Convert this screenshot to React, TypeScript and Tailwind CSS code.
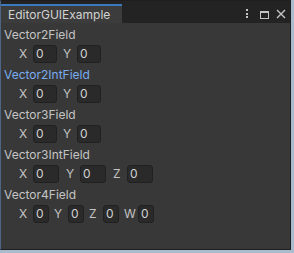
import type { ReactNode } from "react";

const font = { fontFamily: "Inter, 'Noto Sans', sans-serif" };

function Field({ label, width }: { label: string; width: string }) {
    return (
        <div className="flex items-start">
            <span className="w-[14px] h-[18px] leading-[18px] text-[12px] text-[#c4c4c4]">{label}</span>
            <div
                className={`${width} h-[18px] rounded-[3px] border border-[#212121] bg-[#2a2a2a] pl-[2px] leading-[16px] text-[12px] text-[#d2d2d2]`}
            >
                0
            </div>
        </div>
    );
}

function Group({ title, active, children, gap }: { title: string; active?: boolean; children: ReactNode; gap: string }) {
    return (
        <div className="flex flex-col">
            <div className={`h-[20px] leading-[20px] pl-[3px] text-[12px] ${active ? "text-[#7aacf0]" : "text-[#c4c4c4]"}`}>
                {title}
            </div>
            <div className={`h-[20px] pl-[18px] flex ${gap}`}>{children}</div>
        </div>
    );
}

export default function App() {
    return (
        <div className="w-[294px] h-[253px] bg-[#a9bccd]" style={font}>
            <div className="w-[291px] h-[250px] flex flex-col bg-[#383838] border border-[#1e1e1e] border-l-[#4d6685]">
                <div className="h-[22px] flex bg-[#232323] shrink-0">
                    <div className="mt-[3px] w-[121px] bg-[#3c3c3c] border-t-2 border-[#3a79bb] pl-[7px] leading-[17px] text-[12px] text-[#d2d2d2]">
                        EditorGUIExample
                    </div>
                    <div className="flex-1" />
                    <div className="flex items-start pt-[8px] pr-[4px]">
                        <svg width="10" height="10" viewBox="0 0 10 10">
                            <rect x="4" y="0" width="2" height="2" fill="#c4c4c4" />
                            <rect x="4" y="4" width="2" height="2" fill="#c4c4c4" />
                            <rect x="4" y="7" width="2" height="2" fill="#c4c4c4" />
                        </svg>
                        <svg width="11" height="10" viewBox="0 0 11 10" className="ml-[7px] mt-[1px]">
                            <rect x="1.5" y="1.5" width="8" height="7" fill="none" stroke="#c4c4c4" strokeWidth="1" />
                            <rect x="1" y="1" width="9" height="2" fill="#c4c4c4" />
                        </svg>
                        <svg width="10" height="10" viewBox="0 0 10 10" className="ml-[6px]">
                            <path d="M1 1 L9 9 M9 1 L1 9" stroke="#c4c4c4" strokeWidth="1.4" />
                        </svg>
                    </div>
                </div>
                <div className="pt-[2px] flex flex-col">
                    <Group title="Vector2Field" gap="gap-[6px]">
                        <Field label="X" width="w-[24px]" />
                        <Field label="Y" width="w-[24px]" />
                    </Group>
                    <Group title="Vector2IntField" active gap="gap-[6px]">
                        <Field label="X" width="w-[24px]" />
                        <Field label="Y" width="w-[24px]" />
                    </Group>
                    <Group title="Vector3Field" gap="gap-[6px]">
                        <Field label="X" width="w-[24px]" />
                        <Field label="Y" width="w-[24px]" />
                    </Group>
                    <Group title="Vector3IntField" gap="gap-[7px]">
                        <Field label="X" width="w-[26px]" />
                        <Field label="Y" width="w-[26px]" />
                        <Field label="Z" width="w-[26px]" />
                    </Group>
                    <Group title="Vector4Field" gap="gap-[5px]">
                        <Field label="X" width="w-[16px]" />
                        <Field label="Y" width="w-[16px]" />
                        <Field label="Z" width="w-[16px]" />
                        <Field label="W" width="w-[16px]" />
                    </Group>
                </div>
            </div>
        </div>
    );
}
